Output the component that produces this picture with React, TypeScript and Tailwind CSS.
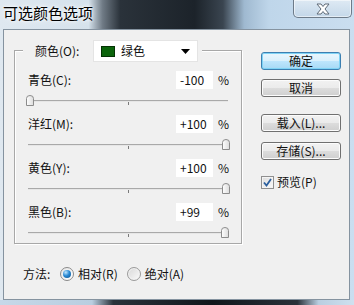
import React from "react";

function Thumb() {
  return (
    <svg width="8" height="11" viewBox="0 0 8 11">
      <defs>
        <linearGradient id="tg" x1="0" y1="0" x2="1" y2="0">
          <stop offset="0" stopColor="#ffffff" />
          <stop offset="1" stopColor="#dcdcdc" />
        </linearGradient>
      </defs>
      <path d="M0.5 10.5 V3.5 Q0.5 0.5 4 0.5 Q7.5 0.5 7.5 3.5 V10.5 Z" fill="url(#tg)" stroke="#8c8c8c" strokeWidth="1" />
    </svg>
  );
}

function Block({ label, value }: { label: string; value: number }) {
  const text = value > 0 ? `+${value}` : `${value}`;
  const left = Math.round(((value + 100) / 200) * 196);
  return (
    <div className="h-[44px] flex flex-col">
      <div className="flex items-center h-[18px] pl-[13px] pr-[13px]">
        <span className="text-[12px] leading-[16px] text-[#111]">{label}</span>
        <div className="ml-auto w-[37px] h-[18px] bg-white pl-[4px] text-[12px] leading-[18px] text-[#111]">{text}</div>
        <span className="ml-[5px] w-[10px] text-[12px] leading-[16px] text-[#111]">%</span>
      </div>
      <div className="relative mt-[6px] ml-[11px] w-[204px] h-[11px]">
        <div className="absolute left-[2px] right-[2px] top-[5px] h-[2px] border-t border-[#a9a9a9] bg-[#e6e6e6]" />
        <div className="absolute left-[102px] top-[7px] w-[1px] h-[3px] bg-[#7a7a7a]" />
        <div className="absolute top-0" style={{ left }}>
          <Thumb />
        </div>
      </div>
    </div>
  );
}

function Button({ children, primary }: { children: React.ReactNode; primary?: boolean }) {
  return (
    <div
      className={
        primary
          ? "w-[80px] h-[18px] rounded-[3px] border border-[#3c7fb1] bg-[linear-gradient(#eaf6fd,#d9f0fc_50%,#bee6fd_50%,#a7d9f5)] shadow-[inset_0_0_0_1px_#7fd3f5] flex items-center justify-center text-[12px] leading-[16px] text-[#111]"
          : "w-[80px] h-[18px] rounded-[3px] border border-[#707070] bg-[linear-gradient(#f2f2f2,#ebebeb_50%,#dddddd_50%,#cfcfcf)] shadow-[inset_0_0_0_1px_#fcfcfc] flex items-center justify-center text-[12px] leading-[16px] text-[#111]"
      }
    >
      {children}
    </div>
  );
}

export default function App() {
  return (
    <div className="w-[354px] h-[305px] overflow-hidden relative flex flex-col font-['Noto_Sans_CJK_SC',sans-serif] bg-[linear-gradient(to_right,#dfe8f0_0%,#d5e2ec_25%,#6f7a85_29%,#2a323a_34%,#1c232a_55%,#3a4550_63%,#9fb9d0_69%,#bfd6ea_76%,#cadef0_100%)]">
      {/* title bar */}
      <div className="h-[29px] shrink-0 pl-[3px] pt-[4px] flex items-start">
        <span className="text-[15px] leading-[18px] text-black [text-shadow:0_0_6px_#fff,0_0_3px_#fff]">可选颜色选项</span>
      </div>
      <div className="absolute right-[2px] top-0 w-[59px] h-[18px] rounded-b-[5px] border border-t-0 border-[#6d7b89] bg-[linear-gradient(#e4edf5cc,#c3d6e7aa)] shadow-[inset_0_0_0_1px_#ffffff88] flex items-center justify-center">
        <svg width="16" height="12" viewBox="0 0 16 12">
          <path d="M2 1 L6 1 L8 3.5 L10 1 L14 1 L10 6 L14 11 L10 11 L8 8.5 L6 11 L2 11 L6 6 Z" fill="#ffffff" stroke="#5f6b78" strokeWidth="1" strokeLinejoin="round" />
        </svg>
      </div>

      {/* client */}
      <div className="ml-[3px] w-[347px] h-[271px] shrink-0 border border-[#8593a0] bg-[#f0f0f0] flex flex-col">
        <div className="flex pl-[10px] pt-[20px]">
          {/* group box */}
          <div className="w-[228px] h-[194px] border border-[#a8a8a8] shadow-[inset_1px_1px_0_#fff,1px_1px_0_#fff] flex flex-col">
            <div className="-mt-[11px] ml-[8px] w-fit h-[22px] bg-[#f0f0f0] pl-[12px] pr-[4px] flex items-center">
              <span className="w-[58px] text-[12px] leading-[16px] text-[#111]">颜色(O):</span>
              <div className="w-[105px] h-[22px] bg-white border border-[#e4e4e4] flex items-center pl-[7px] pr-[4px]">
                <div className="w-[14px] h-[11px] bg-[#0b640b] border border-[#043304]" />
                <span className="ml-[6px] text-[12px] leading-[16px] text-[#111]">绿色</span>
                <svg className="ml-auto mr-[3px]" width="9" height="5" viewBox="0 0 9 5">
                  <path d="M0 0 H9 L4.5 5 Z" fill="#000" />
                </svg>
              </div>
            </div>
            <div className="mt-[9px] flex flex-col">
              <Block label="青色(C):" value={-100} />
              <Block label="洋红(M):" value={100} />
              <Block label="黄色(Y):" value={100} />
              <Block label="黑色(B):" value={99} />
            </div>
          </div>

          {/* buttons */}
          <div className="ml-[19px] mt-[2px] flex flex-col">
            <Button primary>确定</Button>
            <div className="mt-[9px]">
              <Button>取消</Button>
            </div>
            <div className="mt-[17px]">
              <Button>载入(L)...</Button>
            </div>
            <div className="mt-[10px]">
              <Button>存储(S)...</Button>
            </div>
            <div className="mt-[14px] flex items-center">
              <div className="w-[13px] h-[13px] border border-[#8f8f8f] bg-[linear-gradient(135deg,#dcdcdc,#fbfbfb)] shadow-[inset_0_0_0_1px_#f4f4f4] flex items-center justify-center">
                <svg width="9" height="9" viewBox="0 0 9 9">
                  <path d="M1 4.5 L3.5 7.5 L8 1" fill="none" stroke="#2b5f9e" strokeWidth="1.8" />
                </svg>
              </div>
              <span className="ml-[3px] text-[12px] leading-[16px] text-[#111]">预览(P)</span>
            </div>
          </div>
        </div>

        {/* method */}
        <div className="mt-[22px] pl-[19px] flex items-center h-[16px]">
          <span className="w-[37px] text-[12px] leading-[16px] text-[#111]">方法:</span>
          <div className="w-[14px] h-[14px] rounded-full border border-[#8a8a8a] bg-[linear-gradient(135deg,#e6e6e6,#ffffff)] flex items-center justify-center">
            <div className="w-[8px] h-[8px] rounded-full bg-[radial-gradient(circle_at_35%_30%,#bfe6ff,#2a8ad4_45%,#0b4f8a)]" />
          </div>
          <span className="ml-[4px] text-[12px] leading-[16px] text-[#111]">相对(R)</span>
          <div className="ml-[9px] w-[14px] h-[14px] rounded-full border border-[#9a9a9a] bg-[linear-gradient(135deg,#d8d8d8,#fafafa)] shadow-[inset_0_0_0_1px_#f2f2f2]" />
          <span className="ml-[4px] text-[12px] leading-[16px] text-[#111]">绝对(A)</span>
        </div>
      </div>

      {/* bottom frame */}
      <div className="h-[5px] shrink-0 bg-[linear-gradient(to_right,#c6d8e8_0%,#b9cee0_26%,#2a323a_32%,#11161b_60%,#2a323a_84%,#b9cee0_90%,#cfe0ef_100%)]" />
    </div>
  );
}
